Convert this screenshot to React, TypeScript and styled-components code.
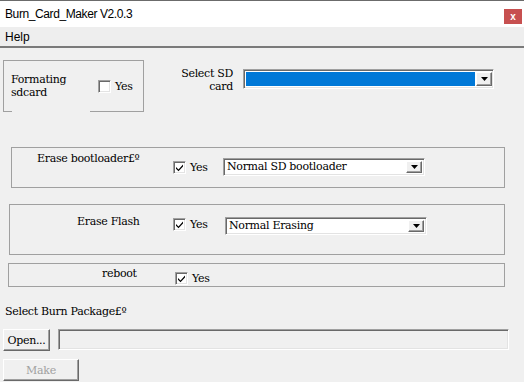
import styled, { createGlobalStyle } from 'styled-components';

const Global = createGlobalStyle`
  html, body {
    margin: 0;
    padding: 0;
    background: #f0f0f0;
  }
  body {
    width: 524px;
    height: 382px;
    overflow: hidden;
    font-family: "DejaVu Serif", "Liberation Serif", serif;
    font-size: 11px;
    color: #000;
  }
`;

const Window = styled.div`
  display: flex;
  flex-direction: column;
  width: 524px;
  height: 382px;
  background: #f0f0f0;
`;

const TitleBar = styled.div`
  height: 27px;
  box-sizing: border-box;
  border-top: 1px solid #6b6b6b;
  background: #fff;
  display: flex;
  align-items: flex-start;
  justify-content: space-between;
  padding: 0 2px 0 5px;
`;

const TitleText = styled.span`
  font-family: "Liberation Sans", Arial, sans-serif;
  font-size: 12px;
  letter-spacing: -0.4px;
  line-height: 16px;
  margin-top: 5px;
`;

const CloseBtn = styled.div`
  width: 18px;
  height: 15px;
  margin-top: 8px;
  background: #c75050;
  color: #fff;
  font-family: "Liberation Sans", sans-serif;
  font-weight: bold;
  font-size: 10px;
  line-height: 15px;
  text-align: center;
`;

const MenuBar = styled.div`
  height: 21px;
  box-sizing: border-box;
  background: #eeeeee;
  border-bottom: 2px solid #7a7a7a;
  display: flex;
  align-items: center;
  padding-left: 5px;
  font-family: "Liberation Sans", Arial, sans-serif;
  font-size: 12px;
`;

const Text = styled.span`
  font-family: "DejaVu Serif", "Liberation Serif", serif;
  font-size: 11px;
  letter-spacing: -0.3px;
  line-height: 13px;
  white-space: pre;
`;

const TopRow = styled.div`
  display: flex;
  align-items: flex-start;
  margin-top: 12px;
  padding-left: 3px;
`;

const FormatBox = styled.div`
  position: relative;
  width: 141px;
  height: 52px;
  box-sizing: border-box;
  border: 1px solid #a0a0a0;
  display: flex;
  align-items: flex-start;
  padding: 12px 0 0 7px;

  &::after {
    content: '';
    position: absolute;
    left: 8px;
    bottom: -1px;
    width: 78px;
    height: 1px;
    background: #f0f0f0;
  }
`;

const FormatLabel = styled(Text)`
  width: 87px;
  white-space: pre-line;
`;

const CheckWrap = styled.div<{ $w?: number; $mt: number }>`
  display: flex;
  align-items: center;
  gap: 4px;
  width: ${(p) => (p.$w ? `${p.$w}px` : 'auto')};
  margin-top: ${(p) => p.$mt}px;
  flex-shrink: 0;
`;

const Box = styled.div`
  width: 13px;
  height: 13px;
  box-sizing: border-box;
  background: #fff;
  border: 1px solid;
  border-color: #a0a0a0 #fff #fff #a0a0a0;
  box-shadow: inset 1px 1px 0 #696969, inset -1px -1px 0 #e3e3e3;
  display: flex;
  align-items: center;
  justify-content: center;
  flex-shrink: 0;
`;

const SdLabel = styled(Text)`
  width: 89px;
  text-align: right;
  margin-top: 7px;
  white-space: pre-line;
`;

const SdCombo = styled.div`
  margin-left: 10px;
  margin-top: 9px;
  width: 251px;
  height: 20px;
  box-sizing: border-box;
  border: 1px solid;
  border-color: #a0a0a0 #fff #fff #a0a0a0;
  box-shadow: inset 1px 1px 0 #696969, inset -1px -1px 0 #e3e3e3;
  background: #fff;
  display: flex;
  padding: 2px 1px 2px 2px;
  gap: 1px;
`;

const Selected = styled.div`
  flex: 1;
  background: #0078d7;
`;

const DropBtn = styled.div<{ $w: number }>`
  width: ${(p) => p.$w}px;
  box-sizing: border-box;
  background: #f0f0f0;
  border: 1px solid;
  border-color: #fff #696969 #696969 #fff;
  box-shadow: inset -1px -1px 0 #a0a0a0;
  display: flex;
  align-items: center;
  justify-content: center;
`;

const Group = styled.div<{ $ml: number; $mt: number; $w: number; $h: number }>`
  margin-left: ${(p) => p.$ml}px;
  margin-top: ${(p) => p.$mt}px;
  width: ${(p) => p.$w}px;
  height: ${(p) => p.$h}px;
  box-sizing: border-box;
  border: 1px solid #a0a0a0;
  display: flex;
  align-items: flex-start;
`;

const RowLabel = styled(Text)<{ $w: number; $pl: number; $mt: number }>`
  width: ${(p) => p.$w}px;
  box-sizing: border-box;
  padding-left: ${(p) => p.$pl}px;
  margin-top: ${(p) => p.$mt}px;
  flex-shrink: 0;
`;

const Combo = styled.div<{ $mt: number }>`
  margin-top: ${(p) => p.$mt}px;
  width: 202px;
  height: 18px;
  box-sizing: border-box;
  border: 1px solid;
  border-color: #a0a0a0 #fff #fff #a0a0a0;
  box-shadow: inset 1px 1px 0 #696969, inset -1px -1px 0 #e3e3e3;
  background: #fff;
  display: flex;
  padding: 2px 2px 2px 3px;
`;

const ComboText = styled(Text)`
  flex: 1;
  line-height: 12px;
`;

const PackLabel = styled(Text)`
  margin-top: 18px;
  margin-left: 5px;
`;

const OpenRow = styled.div`
  display: flex;
  align-items: flex-start;
  margin-top: 11px;
  padding-left: 3px;
  gap: 8px;
`;

const Button = styled.div<{ $w: number; $disabled?: boolean }>`
  width: ${(p) => p.$w}px;
  height: 22px;
  box-sizing: border-box;
  background: #f0f0f0;
  border: 1px solid;
  border-color: #fff #696969 #696969 #fff;
  box-shadow: inset -1px -1px 0 #a0a0a0;
  display: flex;
  align-items: center;
  justify-content: center;
  color: ${(p) => (p.$disabled ? '#a0a0a0' : '#000')};
`;

const PathField = styled.div`
  width: 451px;
  height: 21px;
  box-sizing: border-box;
  border: 1px solid;
  border-color: #a0a0a0 #fff #fff #a0a0a0;
  box-shadow: inset 1px 1px 0 #696969, inset -1px -1px 0 #e3e3e3;
  background: #f0f0f0;
`;

const MakeBtn = styled(Button)`
  margin-top: 8px;
  margin-left: 3px;
`;

function Arrow() {
  return (
    <svg width="7" height="4" viewBox="0 0 7 4">
      <path d="M0 0h7L3.5 4z" fill="#000" />
    </svg>
  );
}

function Check({ checked }: { checked?: boolean }) {
  return (
    <Box>
      {checked && (
        <svg width="9" height="9" viewBox="0 0 9 9">
          <path d="M1 4 L3.5 6.5 L8 1.5 L8 3.5 L3.5 8.3 L1 5.8 Z" fill="#000" />
        </svg>
      )}
    </Box>
  );
}

function Select({ value, mt }: { value: string; mt: number }) {
  return (
    <Combo $mt={mt}>
      <ComboText>{value}</ComboText>
      <DropBtn $w={16}>
        <Arrow />
      </DropBtn>
    </Combo>
  );
}

export default function App() {
  return (
    <Window>
      <Global />
      <TitleBar>
        <TitleText>Burn_Card_Maker V2.0.3</TitleText>
        <CloseBtn>x</CloseBtn>
      </TitleBar>
      <MenuBar>Help</MenuBar>

      <TopRow>
        <FormatBox>
          <FormatLabel>{'Formating\nsdcard'}</FormatLabel>
          <CheckWrap $mt={7}>
            <Check />
            <Text>Yes</Text>
          </CheckWrap>
        </FormatBox>
        <SdLabel>{'Select SD\ncard'}</SdLabel>
        <SdCombo>
          <Selected />
          <DropBtn $w={16}>
            <Arrow />
          </DropBtn>
        </SdCombo>
      </TopRow>

      <Group $ml={11} $mt={35} $w={494} $h={41}>
        <RowLabel $w={161} $pl={25} $mt={4}>Erase bootloader£º</RowLabel>
        <CheckWrap $w={50} $mt={13}>
          <Check checked />
          <Text>Yes</Text>
        </CheckWrap>
        <Select value="Normal SD bootloader" mt={10} />
      </Group>

      <Group $ml={9} $mt={16} $w={496} $h={51}>
        <RowLabel $w={163} $pl={67} $mt={10}>Erase Flash</RowLabel>
        <CheckWrap $w={52} $mt={13}>
          <Check checked />
          <Text>Yes</Text>
        </CheckWrap>
        <Select value="Normal Erasing" mt={12} />
      </Group>

      <Group $ml={8} $mt={8} $w={497} $h={24}>
        <RowLabel $w={166} $pl={93} $mt={3}>reboot</RowLabel>
        <CheckWrap $mt={8}>
          <Check checked />
          <Text>Yes</Text>
        </CheckWrap>
      </Group>

      <PackLabel>Select Burn Package£º</PackLabel>
      <OpenRow>
        <Button $w={47}>
          <Text>Open...</Text>
        </Button>
        <PathField />
      </OpenRow>
      <MakeBtn $w={76} $disabled>
        <Text>Make</Text>
      </MakeBtn>
    </Window>
  );
}
